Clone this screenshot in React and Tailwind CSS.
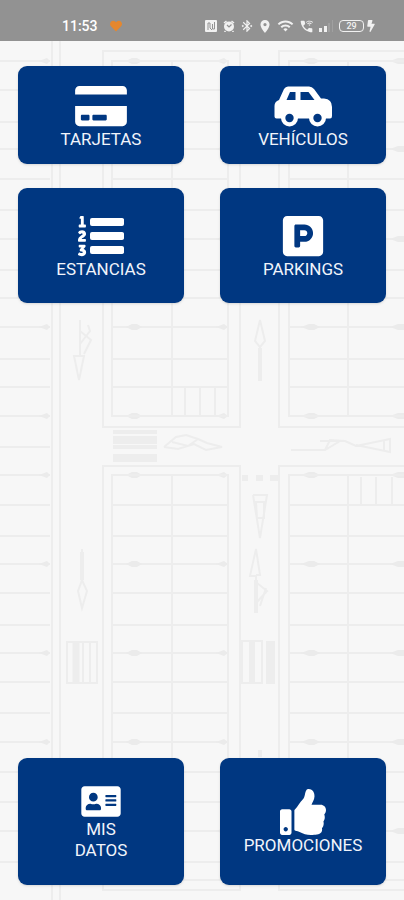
import React from 'react';
import { FaCreditCard, FaListOl, FaParking, FaAddressCard, FaThumbsUp, FaHeart, FaBolt } from 'react-icons/fa';
import { MdBluetoothConnected, MdLocationOn, MdWifi, MdWifiCalling3 } from 'react-icons/md';

function CarIcon({ className }) {
  return (
    <svg className={className} viewBox="0 0 58 46" fill="currentColor" aria-hidden="true">
      <path
        fillRule="evenodd"
        d="M14 3.500H35Q38 3.500 40 6L47 15.500H50Q58 16 58 24V33Q58 35.500 56 35.500H2.500Q.5 35.500 .5 33.500V23Q.5 18.500 5 17L10 6Q11.500 3.500 14 3.500ZM16 9L12.500 17H21.500V9ZM26.500 9V17H40.500L34.500 9Z"
      />
      <circle cx="15.500" cy="35" r="8.500" />
      <circle cx="43.500" cy="35" r="8.500" />
      <g fill="#003781">
        <circle cx="15.500" cy="35" r="4.200" />
        <circle cx="43.500" cy="35" r="4.200" />
      </g>
    </svg>
  );
}

// numbered list with thicker bars than the stock icon
function ListIcon({ className }) {
  return (
    <svg className={className} viewBox="0 0 46 46" fill="currentColor" aria-hidden="true">
      <FaListOl width="46" height="46" size="46" />
      <rect x="12" y="5" width="34" height="8" rx="2" />
      <rect x="12" y="19" width="34" height="8" rx="2" />
      <rect x="12" y="33" width="34" height="8" rx="2" />
    </svg>
  );
}

const topItems = [
  { label: 'TARJETAS', Icon: FaCreditCard, height: 'h-[98px]', iconSize: 'h-[46px] w-[52px]' },
  { label: 'VEHÍCULOS', Icon: CarIcon, height: 'h-[98px]', iconSize: 'h-[46px] w-[58px]' },
  { label: 'ESTANCIAS', Icon: ListIcon, height: 'h-[115px]', iconSize: 'h-[46px] w-[46px]' },
  { label: 'PARKINGS', Icon: FaParking, height: 'h-[115px]', iconSize: 'h-[46px] w-[46px]' },
];

const bottomItems = [
  { label: 'MIS DATOS', Icon: FaAddressCard, height: 'h-[127px]', iconSize: 'h-[35px] w-10', stacked: true },
  { label: 'PROMOCIONES', Icon: FaThumbsUp, height: 'h-[127px]', iconSize: 'h-[46px] w-[46px]' },
];

// parking bay lines, every third one has direction marks
const rows = [
  61, 90, 122, 149, 179, 210, 239, 270, 298, 327, 359, 387, 416, 447, 475, 505, 536,
  564, 593, 625, 653, 682, 713, 742, 772, 802, 831, 862,
];
const markedRows = [61, 149, 239, 327, 416, 475, 564, 653, 742, 831];

function StreetMap() {
  return (
    <svg
      className="absolute inset-0 h-full w-full"
      viewBox="0 0 404 900"
      preserveAspectRatio="xMidYMin slice"
      fill="none"
      stroke="#ededed"
      strokeWidth="2"
      aria-hidden="true"
    >
      {rows.map((y) => (
        <g key={y}>
          <path d={`M0 ${y}H50`} />
          {y !== 447 && <path d={`M112 ${y}H228M289 ${y}H404`} />}
        </g>
      ))}
      {markedRows.map((y) => (
        <g key={y} fill="#ebebeb" stroke="none">
          <path d={`M39 ${y}l8-3 3 3-3 3z`} />
          <path d={`M126 ${y}l6-3h5l5 3-5 3h-5z`} />
          <path d={`M216 ${y}l8-3 4 3-4 3z`} />
          <path d={`M301 ${y}l8-3h5l6 3-6 3h-5z`} />
          <path d={`M390 ${y}l8-3h6v6h-6z`} />
        </g>
      ))}

      {/* kerbs */}
      <path d="M52 0V900M60 0V900" />
      <path d="M240 51H103V427H240zM228 61H112V416H228z" />
      <path d="M404 51H279V427H404M404 61H289V416H404" />
      <path d="M240 890H103V466H240zM228 880H112V475H228z" />
      <path d="M404 890H279V466H404M404 880H289V475H404" />
      <path d="M172 61V416M172 475V880M348 61V416M348 475V880" />
      <path d="M172 387V416M185 387V416M200 387V416M215 387V416" />
      <path d="M361 477V505M376 477V505M392 477V505" />

      {/* zebra crossings */}
      <path d="M113 432H157M113 447H157" strokeWidth="4" />
      <path d="M113 440H157M113 458H157" strokeWidth="8" />
      <path d="M67 642H97V683H67zM83 642V683M90 642V683" />
      <path d="M76 642V683" strokeWidth="7" />
      <path d="M242 641H262V683H242zM267 642H274V683H267z" />
      <path d="M252 642V683M271 642V683" strokeWidth="6" />
      <path d="M242 478H248M256 478H263M270 478H279" strokeWidth="6" />

      {/* road arrows */}
      <path d="M80 320V356H74L79 380L84 356H80M80 331L91 340L84 354M80 344L90 331L88 325" />
      <path d="M260 381V347L255 341L260 320L265 341L260 347" />
      <path d="M164 447L176 437L186 435L198 439L207 443L222 447L206 450L194 444L178 449L164 447M172 442L188 446L198 439" />
      <path d="M291 450H325L340 441H320M325 450L330 440L345 441L356 446L390 439V452L356 445M384 440V451" />
      <path d="M253 495H267L260 538L253 495M256 502H264V518H257z" />
      <path d="M82 549V580L78 591L82 608L87 591L82 580" />
      <path d="M256 613V576H250L256 549L260 575H256M257 583L267 591L257 602M260 606L266 588" />
      <path d="M82 552V580M260 348V381M256 580V613" strokeWidth="4" />
      <path d="M260 750V757" strokeWidth="4" />
    </svg>
  );
}

function StatusBar() {
  return (
    <header className="relative flex h-[41px] items-end justify-between bg-[#929292] pb-[7px] pl-[62px] pr-[29px] text-white">
      <div className="flex items-center gap-3">
        <span className="text-sm font-medium leading-4">11:53</span>
        <FaHeart className="h-3 w-3 text-[#e5872e]" />
      </div>
      <div className="flex h-4 items-center gap-1.5 text-[#f1f1f1]">
        <svg className="h-3 w-3" viewBox="0 0 12 12" fill="none">
          <rect width="12" height="12" rx="1" fill="currentColor" />
          <path d="M3 10V3H5V8L7 10M9.500 2V9H7.500V4" stroke="#929292" />
        </svg>
        <svg className="h-3 w-3" viewBox="0 0 12 12" fill="none">
          <circle cx="6" cy="6.500" r="5" fill="currentColor" />
          <path d="M1 3L3.500 1M11 3L8.500 1M2.500 11L1.500 12M9.500 11L10.500 12" stroke="currentColor" strokeWidth="1.5" />
          <path d="M4 5L6 7L8.500 4.500" stroke="#929292" strokeWidth="1.2" />
        </svg>
        <MdBluetoothConnected className="h-3 w-3" viewBox="2 2 20 20" />
        <MdLocationOn className="h-[13px] w-3" viewBox="3 2 18 20" />
        <MdWifi className="h-[13px] w-[17px]" viewBox="0 4 24 18" />
        <MdWifiCalling3 className="h-[13px] w-[13px]" viewBox="2 2 20 20" />
        <svg className="h-3 w-[14px]" viewBox="0 0 14 12" fill="currentColor">
          <path d="M0 8h3v4H0zM5 6h3v6H5z" />
          <path d="M9 3h2v9H9zM13 0h1v12h-1z" opacity="0.15" />
        </svg>
        <div className="flex items-center gap-[3px]">
          <span className="flex h-3 w-[25px] items-center justify-center rounded-[4px] border border-current text-[9px] font-medium leading-none">
            29
          </span>
          <FaBolt className="h-3 w-2" />
        </div>
      </div>
    </header>
  );
}

function MenuButton({ label, Icon, height, iconSize, stacked }) {
  return (
    <button
      type="button"
      className={`flex flex-col items-center justify-center rounded-[9px] bg-[#003781] pt-0.5 text-[17px] leading-[21px] text-[#f1f4fb] shadow-sm ${height}`}
    >
      <Icon className={`text-white ${iconSize}`} />
      <span className={stacked ? 'w-min' : ''}>{label}</span>
    </button>
  );
}

function App() {
  return (
    <div className="relative flex min-h-screen flex-col bg-[#f7f7f7] font-[Roboto,sans-serif]">
      <StreetMap />
      <StatusBar />
      <main className="relative flex flex-1 flex-col justify-between px-[18px] pb-[15px] pt-[25px]">
        <nav className="grid grid-cols-2 gap-x-9 gap-y-6">
          {topItems.map((item) => (
            <MenuButton key={item.label} {...item} />
          ))}
        </nav>
        <nav className="grid grid-cols-2 gap-x-9">
          {bottomItems.map((item) => (
            <MenuButton key={item.label} {...item} />
          ))}
        </nav>
      </main>
    </div>
  );
}

export default App;
